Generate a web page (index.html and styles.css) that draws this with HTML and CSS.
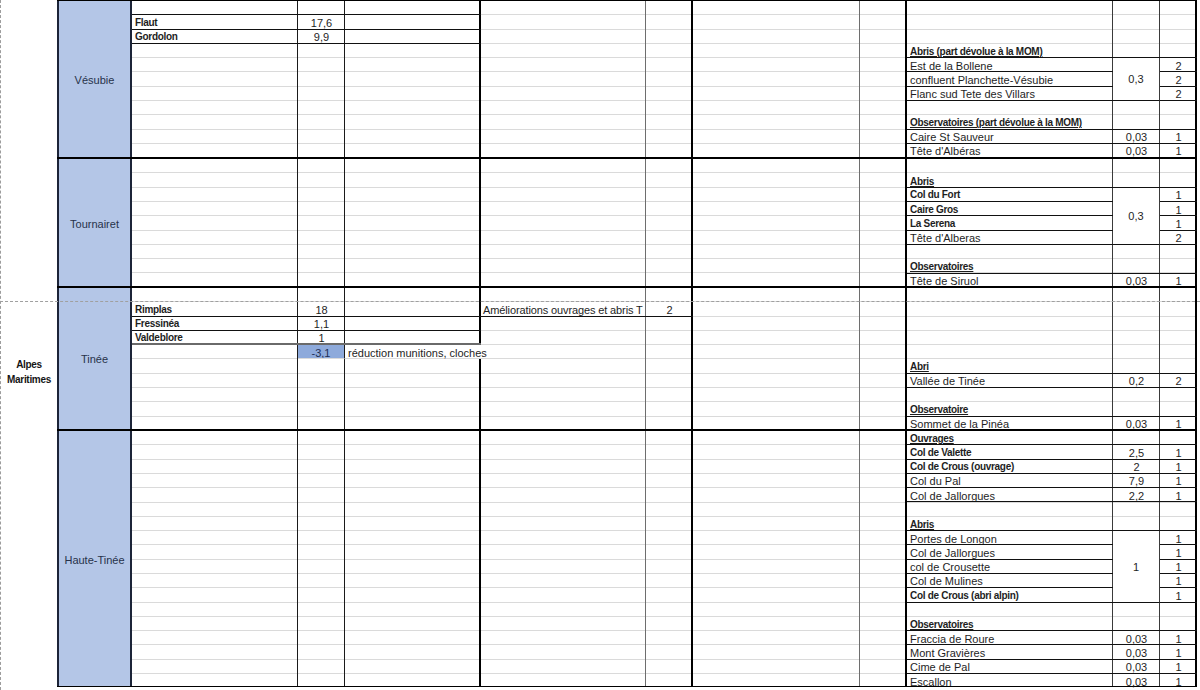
FILE: index.html
```html
<!DOCTYPE html>
<html lang="fr">
<head>
<meta charset="utf-8">
<title>Alpes Maritimes</title>
<link rel="stylesheet" href="styles.css">
</head>
<body>
<div class="sheet">
  <div class="colA"><div>Alpes</div><div>Maritimes</div></div>
  <div class="grid">
    <!-- Vésubie -->
    <div class="sec s11">
      <div class="lab">Vésubie</div>
      <div class="blk ce">
        <div class="sp b"></div>
        <div class="c t bd b">Flaut</div><div class="c n b">17,6</div><div class="c b"></div>
        <div class="c t bd b">Gordolon</div><div class="c n b">9,9</div><div class="c b"></div>
      </div>
      <div class="blk fg"></div>
      <div class="blk hi"></div>
      <div class="blk jl">
        <div class="sp sp3"></div>
        <div class="c h b">Abris (part dévolue à la MOM)</div>
        <div class="c t b">Est de la Bollene</div><div class="c m m3 b">0,3</div><div class="c n b">2</div>
        <div class="c t b">confluent Planchette-Vésubie</div><div class="c n b">2</div>
        <div class="c t b">Flanc sud Tete des Villars</div><div class="c n b">2</div>
        <div class="sp"></div>
        <div class="c h b">Observatoires (part dévolue à la MOM)</div>
        <div class="c t b">Caire St Sauveur</div><div class="c n b">0,03</div><div class="c n b">1</div>
        <div class="c t">Tête d'Albéras</div><div class="c n">0,03</div><div class="c n">1</div>
      </div>
    </div>
    <!-- Tournairet -->
    <div class="sec s9">
      <div class="lab">Tournairet</div>
      <div class="blk ce"></div>
      <div class="blk fg"></div>
      <div class="blk hi"></div>
      <div class="blk jl">
        <div class="sp"></div>
        <div class="c h b">Abris</div>
        <div class="c t bd b">Col du Fort</div><div class="c m m4 b">0,3</div><div class="c n b">1</div>
        <div class="c t bd b">Caire Gros</div><div class="c n b">1</div>
        <div class="c t bd b">La Serena</div><div class="c n b">1</div>
        <div class="c t b">Tête d'Alberas</div><div class="c n b">2</div>
        <div class="sp"></div>
        <div class="c h b">Observatoires</div>
        <div class="c t">Tête de Siruol</div><div class="c n">0,03</div><div class="c n">1</div>
      </div>
    </div>
    <!-- Tinée -->
    <div class="sec s10">
      <div class="lab">Tinée</div>
      <div class="blk ce">
        <div class="sp"></div>
        <div class="c t bd b">Rimplas</div><div class="c n b">18</div><div class="c b"></div>
        <div class="c t bd b">Fressinéa</div><div class="c n b">1,1</div><div class="c b"></div>
        <div class="c t bd bg">Valdeblore</div><div class="c n bg">1</div><div class="c bg"></div>
        <div class="c"></div><div class="c n blue">-3,1</div><div class="c t over">réduction munitions, cloches</div>
      </div>
      <div class="blk fg">
        <div class="sp"></div>
        <div class="c t b fit">Améliorations ouvrages et abris T</div><div class="c n b">2</div>
      </div>
      <div class="blk hi"></div>
      <div class="blk jl">
        <div class="sp sp5"></div>
        <div class="c h b">Abri</div>
        <div class="c t b">Vallée de Tinée</div><div class="c n b">0,2</div><div class="c n b">2</div>
        <div class="sp"></div>
        <div class="c h b">Observatoire</div>
        <div class="c t">Sommet de la Pinéa</div><div class="c n">0,03</div><div class="c n">1</div>
      </div>
    </div>
    <!-- Haute-Tinée -->
    <div class="sec s18">
      <div class="lab">Haute-Tinée</div>
      <div class="blk ce"></div>
      <div class="blk fg"></div>
      <div class="blk hi"></div>
      <div class="blk jl">
        <div class="c h b">Ouvrages</div>
        <div class="c t bd b">Col de Valette</div><div class="c n b">2,5</div><div class="c n b">1</div>
        <div class="c t bd b">Col de Crous (ouvrage)</div><div class="c n b">2</div><div class="c n b">1</div>
        <div class="c t b">Col du Pal</div><div class="c n b">7,9</div><div class="c n b">1</div>
        <div class="c t b">Col de Jallorgues</div><div class="c n b">2,2</div><div class="c n b">1</div>
        <div class="sp"></div>
        <div class="c h b">Abris</div>
        <div class="c t b">Portes de Longon</div><div class="c m m5 b">1</div><div class="c n b">1</div>
        <div class="c t b">Col de Jallorgues</div><div class="c n b">1</div>
        <div class="c t b">col de Crousette</div><div class="c n b">1</div>
        <div class="c t b">Col de Mulines</div><div class="c n b">1</div>
        <div class="c t bd b">Col de Crous (abri alpin)</div><div class="c n b">1</div>
        <div class="sp"></div>
        <div class="c h b">Observatoires</div>
        <div class="c t b">Fraccia de Roure</div><div class="c n b">0,03</div><div class="c n b">1</div>
        <div class="c t b">Mont Gravières</div><div class="c n b">0,03</div><div class="c n b">1</div>
        <div class="c t b">Cime de Pal</div><div class="c n b">0,03</div><div class="c n b">1</div>
        <div class="c t">Escallon</div><div class="c n">0,03</div><div class="c n">1</div>
      </div>
    </div>
  </div>
  <div class="pagebreak"></div>
</div>
</body>
</html>
```

FILE: styles.css
```css
* { box-sizing: border-box; }
html, body { margin: 0; padding: 0; background: #fff; }
body {
  font-family: "Liberation Sans", Arial, sans-serif;
  font-size: 11px;
  color: #1e1e1e;
}
.sheet {
  position: relative;
  display: flex;
  width: 1200px;
  height: 690px;
  overflow: hidden;
}
.colA {
  flex: none;
  width: 57px;
  border-left: 1px dashed #9c9c9c;
  padding-top: 357px;
  text-align: center;
  font-weight: 700;
  font-size: 10px;
  letter-spacing: -0.3px;
  line-height: 15px;
  color: #151515;
}
.grid {
  flex: none;
  width: 1140px;
  border-top: 1px solid #000;
}
.sec {
  display: flex;
  border-bottom: 1px solid #000;
}
.sec + .sec { border-top: 1px solid #000; }
.s11 { height: 157.3px; }
.s9 { height: 128.7px; }
.s10 { height: 143px; }
.s18 { height: 257.4px; }

.lab {
  flex: none;
  width: 75px;
  background: #b4c6e7;
  border-left: 2px solid #1c2438;
  border-right: 2px solid #1c2438;
  display: flex;
  align-items: center;
  justify-content: center;
  padding-top: 2px;
  color: #27324a;
}
.blk {
  flex: none;
  display: grid;
  grid-auto-rows: 14.3px;
  align-content: start;
}
.ce {
  width: 349px;
  grid-template-columns: 166px 47px 136px;
  background-image:
    linear-gradient(to right, transparent 165px, #1a1a1a 165px, #1a1a1a 166px, transparent 166px, transparent 212px, #1a1a1a 212px, #1a1a1a 213px, transparent 213px, transparent 347px, #000 347px),
    repeating-linear-gradient(to bottom, transparent 0, transparent 13.3px, #dadada 13.3px, #dadada 14.3px);
}
.fg {
  width: 212px;
  grid-template-columns: 165px 47px;
  background-image:
    linear-gradient(to right, transparent 164px, #6e6e6e 164px, #6e6e6e 165px, transparent 165px, transparent 210px, #000 210px),
    repeating-linear-gradient(to bottom, transparent 0, transparent 13.3px, #dadada 13.3px, #dadada 14.3px);
}
.hi {
  width: 214px;
  grid-template-columns: 167px 47px;
  background-image:
    linear-gradient(to right, transparent 166px, #6e6e6e 166px, #6e6e6e 167px, transparent 167px, transparent 212px, #000 212px),
    repeating-linear-gradient(to bottom, transparent 0, transparent 13.3px, #dadada 13.3px, #dadada 14.3px);
}
.jl {
  width: 290px;
  grid-template-columns: 206px 47px 37px;
  background-image:
    linear-gradient(to right, transparent 205px, #3a3a3a 205px, #3a3a3a 206px, transparent 206px, transparent 252px, #3a3a3a 252px, #3a3a3a 253px, transparent 253px, transparent 288px, #000 288px),
    repeating-linear-gradient(to bottom, transparent 0, transparent 13.3px, #dadada 13.3px, #dadada 14.3px);
}

.c {
  white-space: nowrap;
  overflow: hidden;
  line-height: 14px;
  padding-top: 0.5px;
}
.t { padding-left: 3px; }
.n { text-align: center; }
.fit { letter-spacing: -0.12px; padding-left: 2px; }
.bd, .h {
  font-weight: 700;
  font-size: 10px;
  letter-spacing: -0.3px;
}
.b { border-bottom: 1px solid #111; }
.bg { border-bottom: 2px solid #6a6a6a; }
.h {
  grid-column: 1 / -1;
  padding-left: 3px;
  padding-top: 1px;
  text-decoration: underline;
}
.sp { grid-column: 1 / -1; }
.sp3 { grid-row: span 3; }
.sp5 { grid-row: span 5; }
.m {
  background: #fff;
  border-right: 1px solid #3a3a3a;
  display: flex;
  align-items: center;
  justify-content: center;
}
.m3 { grid-row: span 3; }
.m4 { grid-row: span 4; }
.m5 { grid-row: span 5; }
.blue {
  background: #8eaadb;
  color: #1f2f55;
  border-right: 1px solid #1a1a1a;
  border-bottom: 1px solid #dadada;
}
.over {
  overflow: visible;
  background: #fff;
  border-bottom: 1px solid #dadada;
}
.pagebreak {
  position: absolute;
  left: 0;
  right: 0;
  top: 301px;
  border-top: 1px dashed #a0a0a0;
}
```
